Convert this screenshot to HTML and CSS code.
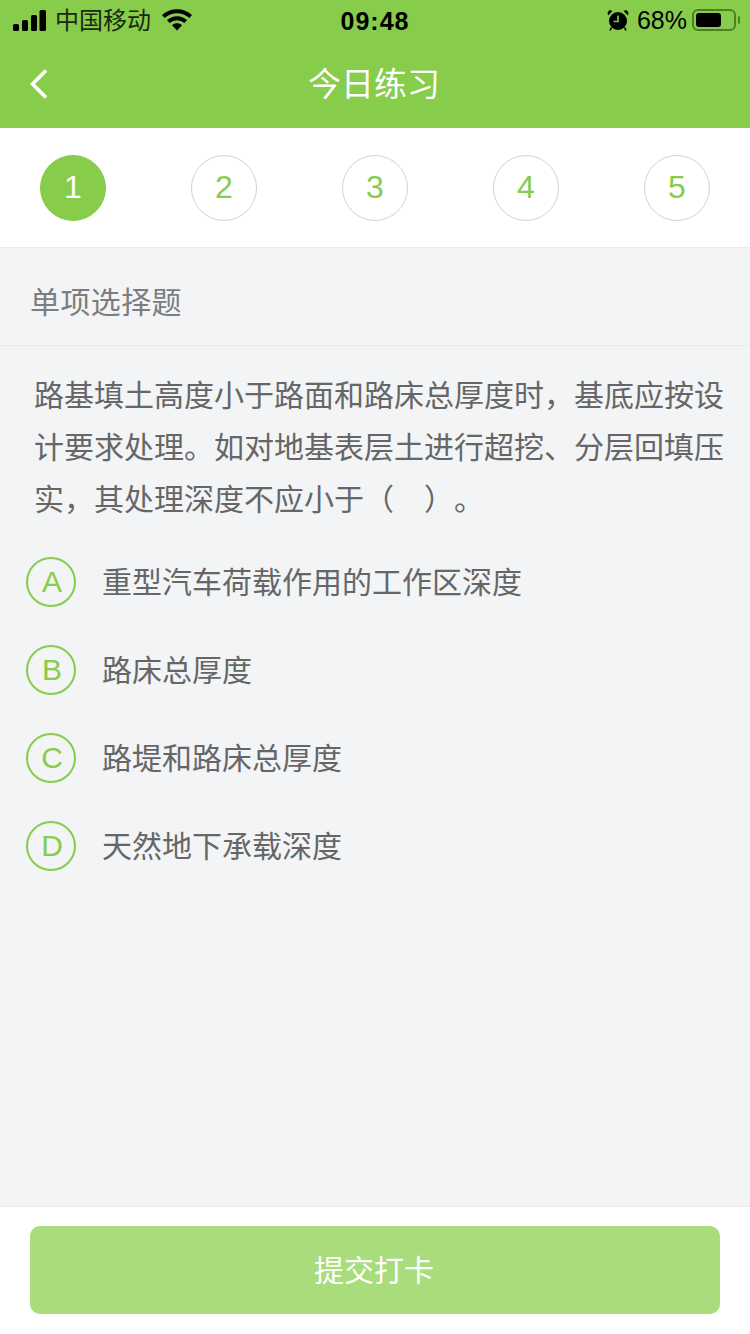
FILE: index.html
```html
<!DOCTYPE html>
<html lang="zh-CN">
<head>
    <meta charset="UTF-8">
    <meta name="viewport" content="width=device-width, initial-scale=1.0">
    <title>今日练习</title>
    <link rel="stylesheet" href="styles.css">
</head>
<body>
    <div class="page">
        <header class="top">
            <div class="status-bar">
                <div class="status-left">
                    <svg class="signal" width="33" height="21" viewBox="0 0 33 21">
                        <rect x="0" y="14" width="6" height="7" rx="1.5"/>
                        <rect x="9" y="10" width="6" height="11" rx="1.5"/>
                        <rect x="18" y="5" width="6" height="16" rx="1.5"/>
                        <rect x="26.5" y="0" width="6.5" height="21" rx="1.5"/>
                    </svg>
                    <span class="carrier">中国移动</span>
                    <svg class="wifi" width="30" height="22" viewBox="0 0 30 22">
                        <path d="M1.3 7.5C9 .5 21 .5 28.7 7.5" fill="none" stroke="#000" stroke-width="4"/>
                        <path d="M6.3 12.6C11.5 8 18.5 8 23.7 12.6" fill="none" stroke="#000" stroke-width="4"/>
                        <path d="M10 16.2C13 13.6 17 13.6 20 16.2L15 21.5Z"/>
                    </svg>
                </div>
                <div class="status-time">09:48</div>
                <div class="status-right">
                    <svg class="alarm" width="22" height="22" viewBox="0 0 22 22">
                        <circle cx="11" cy="12" r="9"/>
                        <path d="M1 6.5 5.5 2 2.5 1 .6 3.5ZM21 6.5 16.5 2 19.5 1 21.4 3.5Z"/>
                        <path d="M11 6.5V12.5H6.5" fill="none" stroke="#87cc4b" stroke-width="1.6"/>
                        <path d="M4.5 18.5 3 21.5M17.5 18.5 19 21.5" stroke="#000" stroke-width="1.6"/>
                    </svg>
                    <span class="battery-text">68%</span>
                    <div class="battery"><div class="battery-level"></div></div>
                    <div class="battery-cap"></div>
                </div>
            </div>
            <div class="nav-bar">
                <svg class="back" width="20" height="32" viewBox="0 0 20 32">
                    <path d="M17 2.5 3.5 16 17 29.5" fill="none" stroke="#fff" stroke-width="3.6"/>
                </svg>
                <h1 class="nav-title">今日练习</h1>
            </div>
        </header>

        <div class="steps">
            <div class="step active">1</div>
            <div class="step">2</div>
            <div class="step">3</div>
            <div class="step">4</div>
            <div class="step">5</div>
        </div>

        <main class="content">
            <div class="question-type">单项选择题</div>
            <p class="question">路基填土高度小于路面和路床总厚度时，基底应按设计要求处理。如对地基表层土进行超挖、分层回填压实，其处理深度不应小于（&emsp;）。</p>
            <ul class="options">
                <li class="option"><span class="option-key">A</span><span class="option-text">重型汽车荷载作用的工作区深度</span></li>
                <li class="option"><span class="option-key">B</span><span class="option-text">路床总厚度</span></li>
                <li class="option"><span class="option-key">C</span><span class="option-text">路堤和路床总厚度</span></li>
                <li class="option"><span class="option-key">D</span><span class="option-text">天然地下承载深度</span></li>
            </ul>
        </main>

        <footer class="bottom">
            <button class="submit-btn">提交打卡</button>
        </footer>
    </div>
</body>
</html>
```

FILE: styles.css
```css
* {
    margin: 0;
    padding: 0;
    box-sizing: border-box;
    font-family: 'Liberation Sans', 'Noto Sans CJK SC', sans-serif;
}

body {
    background: #f2f4f6;
}

.page {
    display: flex;
    flex-direction: column;
    height: 1334px;
}

.top {
    background: #87cc4b;
    height: 128px;
}

.status-bar {
    display: flex;
    justify-content: space-between;
    align-items: center;
    height: 40px;
    padding: 0 10px 0 13px;
    position: relative;
    color: #000;
}

.status-left,
.status-right {
    display: flex;
    align-items: center;
}

.signal {
    margin-right: 9px;
}

.carrier {
    font-size: 24px;
    color: #1a2a10;
    padding-bottom: 4px;
}

.wifi {
    margin-left: 11px;
}

.status-time {
    position: absolute;
    left: 0;
    right: 0;
    top: 7px;
    text-align: center;
    font-size: 25px;
    font-weight: bold;
    letter-spacing: 1px;
}

.alarm {
    margin-right: 8px;
}

.battery-text {
    font-size: 25px;
    margin-right: 5px;
}

.battery {
    width: 44px;
    height: 22px;
    border: 2px solid #4c7f26;
    border-radius: 6px;
    padding: 2px;
}

.battery-level {
    width: 25px;
    height: 14px;
    background: #000;
    border-radius: 3px;
}

.battery-cap {
    width: 2px;
    height: 8px;
    margin-left: 2px;
    background: #4c7f26;
    border-radius: 0 2px 2px 0;
}

.nav-bar {
    display: flex;
    justify-content: center;
    align-items: center;
    height: 88px;
    position: relative;
}

.back {
    position: absolute;
    left: 29px;
    top: 28px;
}

.nav-title {
    font-size: 33px;
    font-weight: normal;
    color: #fff;
    padding: 0 2px 4px 0;
}

.steps {
    display: flex;
    justify-content: space-between;
    align-items: center;
    height: 120px;
    padding: 0 40px;
    background: #fff;
    border-bottom: 1px solid #e9ebed;
}

.step {
    display: flex;
    justify-content: center;
    align-items: center;
    width: 66px;
    height: 66px;
    border: 1px solid #d0d3d3;
    border-radius: 50%;
    font-size: 32px;
    color: #87cc4b;
}

.step.active {
    background: #87cc4b;
    border-color: #87cc4b;
    color: #fff;
}

.content {
    flex: 1;
}

.question-type {
    display: flex;
    align-items: center;
    height: 98px;
    padding: 6px 0 0 30px;
    font-size: 30px;
    letter-spacing: 0.4px;
    color: #7b7d7e;
    border-bottom: 1px solid #e9ebed;
}

.question {
    padding: 24px 20px 0 34px;
    font-size: 30px;
    line-height: 52px;
    color: #666;
    text-spacing-trim: space-all;
}

.options {
    list-style: none;
    margin-top: 31px;
}

.option {
    display: flex;
    align-items: center;
    height: 50px;
    margin-bottom: 38px;
    padding-left: 26px;
    font-size: 30px;
    color: #666;
}

.option-key {
    display: flex;
    justify-content: center;
    align-items: center;
    width: 50px;
    height: 50px;
    margin-right: 26px;
    padding-left: 2px;
    border: 2px solid #87cc4b;
    border-radius: 50%;
    font-size: 30px;
    color: #87cc4b;
}

.option-text {
    padding-bottom: 4px;
}

.bottom {
    height: 128px;
    padding: 19px 30px 0;
    background: #fff;
    border-top: 1px solid #e9ebed;
}

.submit-btn {
    display: block;
    width: 100%;
    height: 88px;
    padding: 0 2px 4px 0;
    border: none;
    border-radius: 10px;
    background: #a9dc7a;
    color: #fff;
    font-size: 30px;
}
```
